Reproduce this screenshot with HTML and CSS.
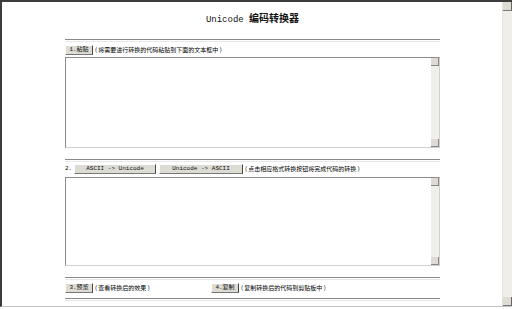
FILE: index.html
```html
<!DOCTYPE html>
<html>
<head>
<meta charset="utf-8">
<link rel="stylesheet" href="styles.css">
</head>
<body>
<div class="window">
  <div class="page">
    <div class="main">
      <h1 class="title"><span class="lat">Unicode</span> <span class="cjk">编码转换器</span></h1>
      <div class="rule r1"></div>
      <div class="row row1">
        <span class="btn btn-s">1.粘贴</span>
        <span class="note">( 将需要进行转换的代码粘贴到下面的文本框中 )</span>
      </div>
      <div class="box box1"><div class="vscroll"><span class="sb up"></span><span class="sb down"></span></div></div>
      <div class="rule r2"></div>
      <div class="row row2">
        <span class="num">2.</span>
        <span class="btn btn-a">ASCII -&gt; Unicode</span>
        <span class="btn btn-b">Unicode -&gt; ASCII</span>
        <span class="note">( 点击相应格式转换按钮将完成代码的转换 )</span>
      </div>
      <div class="box box2"><div class="vscroll"><span class="sb up"></span><span class="sb down"></span></div></div>
      <div class="rule r3"></div>
      <div class="row row3">
        <div class="half">
          <span class="btn btn-s">3.预览</span>
          <span class="note">( 查看转换后的效果 )</span>
        </div>
        <div class="half2">
          <span class="btn btn-s">4.复制</span>
          <span class="note">( 复制转换后的代码到剪贴板中 )</span>
        </div>
      </div>
      <div class="rule r4"></div>
    </div>
  </div>
  <div class="winscroll"><span class="wsb up"></span><span class="wsb down"></span></div>
</div>
</body>
</html>
```
FILE: styles.css
```css
html, body { margin: 0; padding: 0; background: #fff; }
body { font-family: "Liberation Mono", "Noto Sans CJK SC", monospace; color: #000; }
.window {
  width: 512px; height: 307px; box-sizing: border-box;
  border-left: 2px solid #3c3c3c; border-top: 2px solid #3c3c3c;
  border-bottom: 1px solid #c4c4c4;
  display: flex; overflow: hidden;
}
.page { flex: 1; }
.main { width: 375px; margin: 0 auto; padding-left: 1px; display: flex; flex-direction: column; }
.title { margin: 10px 0 0; height: 12px; line-height: 12px; font-size: 9px; text-align: center; font-weight: normal; color: #111; }
.title .lat { font-size: 9px; font-family: "Liberation Mono", monospace; }
.title .cjk { font-size: 10px; font-weight: bold; font-family: "Noto Sans CJK SC", sans-serif; }
.rule { height: 1px; border-top: 1px solid #8a8a8a; border-bottom: 1px solid #e8e8e8; }
.r1 { margin-top: 15px; }
.r2 { margin-top: 11px; }
.r3 { margin-top: 11px; }
.r4 { margin-top: 5px; }
.row { display: flex; align-items: center; height: 10px; font-size: 6px; line-height: 10px; }
.row1 { margin-top: 3px; }
.row2 { margin-top: 2px; }
.row3 { margin-top: 3px; }
.btn {
  box-sizing: border-box; height: 10px; background: #dcdbd4;
  border-top: 1px solid #fff; border-left: 1px solid #fff;
  border-right: 1px solid #444; border-bottom: 1px solid #777;
  display: inline-flex; align-items: center; justify-content: center;
  font-size: 6px; color: #111;
}
.btn-s { width: 28px; }
.btn-a { width: 82px; margin-left: 2px; }
.btn-b { width: 84px; margin-left: 3px; }
.num { width: 7px; font-size: 6px; }
.note { margin-left: 2px; font-size: 6px; font-family: "Noto Sans CJK SC", sans-serif; color: #000; white-space: nowrap; }
.half { width: 146px; display: flex; align-items: center; }
.half2 { display: flex; align-items: center; }
.box {
  box-sizing: border-box; border: 1px solid #8c8c8c; border-right-color: #d0d0d0; border-bottom-color: #d0d0d0;
  display: flex; justify-content: flex-end;
}
.box1 { margin-top: 2px; height: 91px; }
.box2 { margin-top: 3px; height: 89px; }
.vscroll { width: 8px; background: #f0efe9; display: flex; flex-direction: column; justify-content: space-between; }
.sb { display: block; height: 8px; background: #dddbd3; border-right: 1px solid #888; border-bottom: 1px solid #888; box-sizing: border-box; }
.winscroll { width: 9px; background: #efeee8; border-left: 1px solid #e4e3dc; display: flex; flex-direction: column; justify-content: space-between; }
.wsb { display: block; height: 9px; background: #dddbd3; border-right: 1px solid #666; border-bottom: 1px solid #777; box-sizing: border-box; }
```
